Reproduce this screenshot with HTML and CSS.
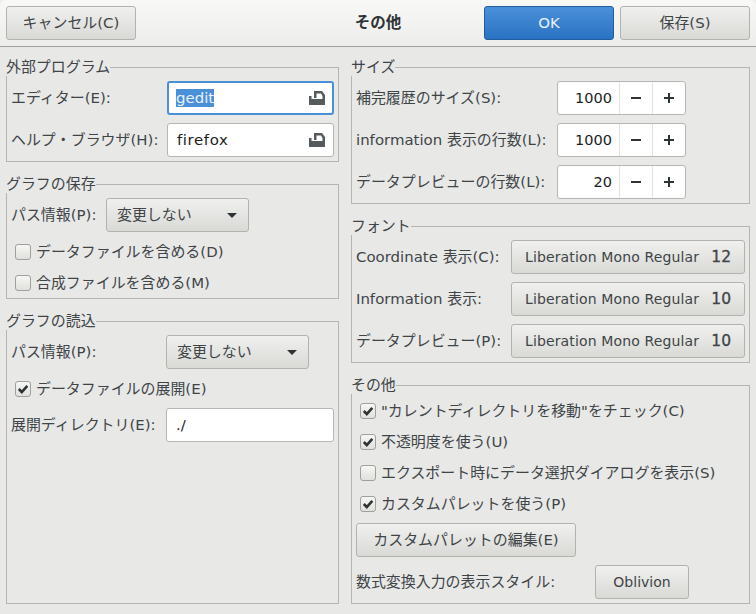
FILE: index.html
```html
<!DOCTYPE html>
<html lang="ja">
<head>
  <meta charset="UTF-8">
  <meta name="viewport" content="width=device-width, initial-scale=1.0">
  <title>その他</title>
  <link rel="stylesheet" href="styles.css">
</head>
<body>
  <header class="headerbar">
    <button type="button" class="btn head-btn">キャンセル(C)</button>
    <div class="title">その他</div>
    <div class="head-right">
      <button type="button" class="btn btn-ok head-btn">OK</button>
      <button type="button" class="btn head-btn">保存(S)</button>
    </div>
  </header>

  <main class="content">
    <div class="column">
      <fieldset class="frame">
        <legend>外部プログラム</legend>
        <div class="row">
          <span class="label w-156">エディター(E):</span>
          <div class="entry entry-focus w-167">
            <span class="selected">gedit</span>
            <svg class="file-icon" viewBox="0 0 16 16"><path d="M5 1h8l3 4v4h-2.500V6l-1.500-2.500H7.500V8H5z M0 6h2.500v3H16v6H0z"/></svg>
          </div>
        </div>
        <div class="row">
          <span class="label w-156">ヘルプ・ブラウザ(H):</span>
          <div class="entry w-167">
            <span class="spaced">firefox</span>
            <svg class="file-icon" viewBox="0 0 16 16"><path d="M5 1h8l3 4v4h-2.500V6l-1.500-2.500H7.500V8H5z M0 6h2.500v3H16v6H0z"/></svg>
          </div>
        </div>
      </fieldset>

      <fieldset class="frame">
        <legend>グラフの保存</legend>
        <div class="row">
          <span class="label w-95">パス情報(P):</span>
          <button type="button" class="btn combo"><span>変更しない</span><i class="arrow"></i></button>
        </div>
        <div class="check"><span class="box"></span>データファイルを含める(D)</div>
        <div class="check"><span class="box"></span>合成ファイルを含める(M)</div>
      </fieldset>

      <fieldset class="frame frame-grow">
        <legend>グラフの読込</legend>
        <div class="row">
          <span class="label w-155">パス情報(P):</span>
          <button type="button" class="btn combo"><span>変更しない</span><i class="arrow"></i></button>
        </div>
        <div class="check">
          <span class="box"><svg viewBox="0 0 14 14"><path class="tick" d="M2.800 7l3 3 5.500-6.200"/></svg></span>データファイルの展開(E)
        </div>
        <div class="row">
          <span class="label w-155">展開ディレクトリ(E):</span>
          <div class="entry w-168"><span>./</span></div>
        </div>
      </fieldset>
    </div>

    <div class="column">
      <fieldset class="frame">
        <legend>サイズ</legend>
        <div class="row">
          <span class="label w-201">補完履歴のサイズ(S):</span>
          <div class="spin">
            <span class="spin-value">1000</span>
            <span class="spin-btn"><i class="minus"></i></span>
            <span class="spin-btn"><i class="plus"></i></span>
          </div>
        </div>
        <div class="row">
          <span class="label w-201">information 表示の行数(L):</span>
          <div class="spin">
            <span class="spin-value">1000</span>
            <span class="spin-btn"><i class="minus"></i></span>
            <span class="spin-btn"><i class="plus"></i></span>
          </div>
        </div>
        <div class="row">
          <span class="label w-201">データプレビューの行数(L):</span>
          <div class="spin">
            <span class="spin-value">20</span>
            <span class="spin-btn"><i class="minus"></i></span>
            <span class="spin-btn"><i class="plus"></i></span>
          </div>
        </div>
      </fieldset>

      <fieldset class="frame">
        <legend>フォント</legend>
        <div class="row">
          <span class="label w-155">Coordinate 表示(C):</span>
          <button type="button" class="btn font-btn"><span class="font-name">Liberation Mono Regular</span><span class="font-size">12</span></button>
        </div>
        <div class="row">
          <span class="label w-155">Information 表示:</span>
          <button type="button" class="btn font-btn"><span class="font-name">Liberation Mono Regular</span><span class="font-size">10</span></button>
        </div>
        <div class="row">
          <span class="label w-155">データプレビュー(P):</span>
          <button type="button" class="btn font-btn"><span class="font-name">Liberation Mono Regular</span><span class="font-size">10</span></button>
        </div>
      </fieldset>

      <fieldset class="frame frame-grow">
        <legend>その他</legend>
        <div class="check">
          <span class="box"><svg viewBox="0 0 14 14"><path class="tick" d="M2.800 7l3 3 5.500-6.200"/></svg></span>"カレントディレクトリを移動"をチェック(C)
        </div>
        <div class="check">
          <span class="box"><svg viewBox="0 0 14 14"><path class="tick" d="M2.800 7l3 3 5.500-6.200"/></svg></span>不透明度を使う(U)
        </div>
        <div class="check"><span class="box"></span>エクスポート時にデータ選択ダイアログを表示(S)</div>
        <div class="check">
          <span class="box"><svg viewBox="0 0 14 14"><path class="tick" d="M2.800 7l3 3 5.500-6.200"/></svg></span>カスタムパレットを使う(P)
        </div>
        <div class="row">
          <button type="button" class="btn palette-btn">カスタムパレットの編集(E)</button>
        </div>
        <div class="row">
          <span class="label w-239">数式変換入力の表示スタイル:</span>
          <button type="button" class="btn oblivion-btn">Oblivion</button>
        </div>
      </fieldset>
    </div>
  </main>
</body>
</html>
```

FILE: styles.css
```css
* {
  box-sizing: border-box;
}
html {
  background-color: #eeeeee;
}
body {
  margin: 0;
  width: 756px;
  height: 614px;
  display: flex;
  flex-direction: column;
  overflow: hidden;
  background-color: #e8e8e7;
  border-radius: 5px 5px 0 0;
  font-family: "DejaVu Sans", "Noto Sans CJK JP", sans-serif;
  font-size: 14.95px;
  line-height: 18px;
  color: #3f4547;
}

.headerbar {
  height: 47px;
  flex: none;
  display: grid;
  grid-template-columns: 1fr auto 1fr;
  align-items: center;
  padding: 0 6px;
  background: linear-gradient(#f8f8f7, #ededec);
  border-bottom: 1px solid #a1a19e;
  border-radius: 5px 5px 0 0;
}
.title {
  font-size: 15.5px;
  font-weight: bold;
  color: #2e3436;
}
.head-right {
  display: flex;
  justify-content: flex-end;
  gap: 6px;
}
.head-btn {
  width: 130px;
}

.btn {
  height: 34px;
  padding: 0;
  font: inherit;
  color: #3f4547;
  background: linear-gradient(#f0f0ee, #d9d9d6);
  border: 1px solid #b2b2ae;
  border-radius: 3px;
  cursor: pointer;
}
.btn-ok {
  color: #e9f1fb;
  background: linear-gradient(#4a90d9, #2a72c3);
  border-color: #215d9c;
}

.content {
  flex: 1;
  display: grid;
  grid-template-columns: 333px 399px;
  gap: 12px;
  padding: 11px 6px 10px;
}
.column {
  display: flex;
  flex-direction: column;
  gap: 13px;
}

.frame {
  min-width: 0;
  margin: 0;
  padding: 5px 4px 4px;
  display: flex;
  flex-direction: column;
  gap: 8px;
  border: 1px solid #b4b4b1;
}
.frame-grow {
  flex: 1;
}
.frame legend {
  margin-left: -5px;
  padding: 0;
  line-height: 18px;
}

.row {
  display: flex;
  align-items: center;
  height: 34px;
}
.label {
  flex: none;
}
.w-95 { width: 95px; }
.w-155 { width: 155px; }
.w-156 { width: 156px; }
.w-167 { width: 167px; }
.w-168 { width: 168px; }
.w-201 { width: 201px; }
.w-239 { width: 239px; }

.entry {
  height: 34px;
  display: flex;
  align-items: center;
  justify-content: space-between;
  padding: 0 8px 0 9px;
  background-color: #fff;
  color: #1a1d1e;
  border: 1px solid #b6b6b3;
  border-radius: 3px;
}
.entry-focus {
  border: 2px solid #4a90d9;
  padding: 0 7px 0 7px;
}
.selected {
  background-color: #4a90d9;
  color: #e9f1fb;
}
.spaced {
  letter-spacing: 0.6px;
}
.file-icon {
  width: 16px;
  height: 16px;
  fill: #555b5d;
}

.combo {
  width: 143px;
  display: flex;
  align-items: center;
  justify-content: space-between;
  padding: 0 11px 0 10px;
}
.arrow {
  width: 0;
  height: 0;
  border-left: 5px solid transparent;
  border-right: 5px solid transparent;
  border-top: 5px solid #2e3436;
}

.check {
  height: 23px;
  display: flex;
  align-items: center;
  padding-left: 4px;
}
.box {
  flex: none;
  width: 16px;
  height: 16px;
  margin-right: 5px;
  background: linear-gradient(#f6f6f4, #e0e0dd);
  border: 1px solid #a0a09c;
  border-radius: 3px;
}
.box svg {
  display: block;
  width: 14px;
  height: 14px;
}
.tick {
  fill: none;
  stroke: #2e3436;
  stroke-width: 2.6;
}

.spin {
  width: 129px;
  height: 34px;
  display: flex;
  background-color: #fff;
  border: 1px solid #b6b6b3;
  border-radius: 3px;
  color: #1a1d1e;
}
.spin-value {
  width: 61px;
  padding-right: 7px;
  font-size: 14.5px;
  line-height: 32px;
  text-align: right;
}
.spin-btn {
  flex: 1;
  display: flex;
  align-items: center;
  justify-content: center;
  border-left: 1px solid #e2e2e0;
}
.minus,
.plus {
  position: relative;
  display: block;
  width: 10px;
  height: 2px;
  background-color: #2e3436;
}
.plus::after {
  content: "";
  position: absolute;
  left: 4px;
  top: -4px;
  width: 2px;
  height: 10px;
  background-color: #2e3436;
}

.font-btn {
  width: 234px;
  display: flex;
  align-items: center;
  justify-content: space-between;
  padding: 0 13px;
}
.font-name {
  font-size: 14px;
  letter-spacing: 0.13px;
}
.font-size {
  font-size: 15.5px;
  font-weight: 500;
  -webkit-text-stroke: 0.3px #3f4547;
}
.palette-btn {
  width: 220px;
}
.oblivion-btn {
  width: 94px;
  font-size: 14px;
}
```
